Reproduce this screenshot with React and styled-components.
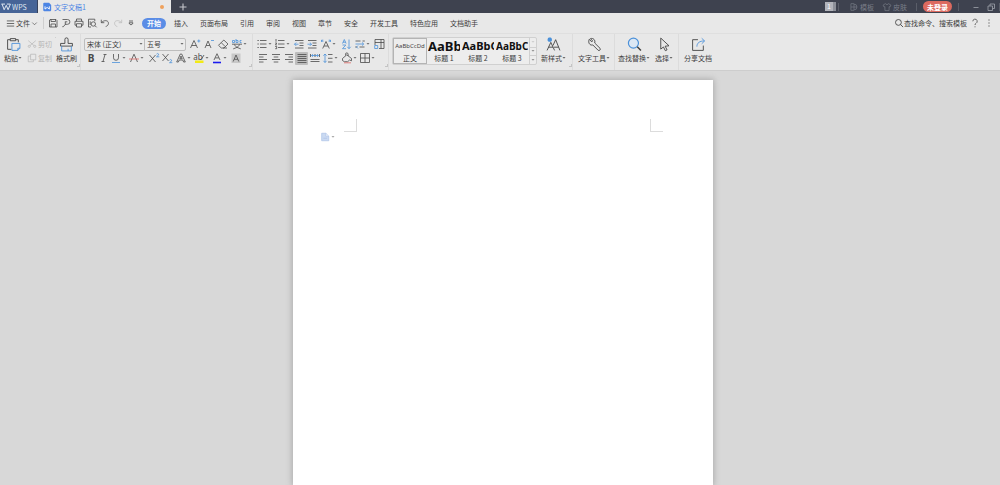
import React from 'react';
import styled, { createGlobalStyle } from 'styled-components';

const ink = '#4a4a4a';
const blue = '#4a90d9';

const GlobalStyle = createGlobalStyle`
  * { box-sizing: border-box; }
  body {
    margin: 0;
    background: #d8d8d8;
    color: #3c3c3c;
    font: 7px/10px "Noto Sans CJK SC", "Noto Sans", sans-serif;
  }
  button, input, select {
    font: inherit;
    color: inherit;
    border: 0;
    padding: 0;
    margin: 0;
    background: none;
    outline: 0;
    white-space: nowrap;
  }
`;

const Shell = styled.div`
  display: flex;
  flex-direction: column;
  min-height: 100vh;
`;

/* ---------- title bar ---------- */

const TitleBar = styled.header`
  display: flex;
  align-items: stretch;
  height: 13px;
  background: #3e424f;
  color: #797d88;
`;

const HomeTab = styled.button`
  display: flex;
  align-items: center;
  gap: 1px;
  width: 38px;
  padding-left: 1px;
  background: #466497;
  border-right: 1px solid #37425c;
  color: #dfe6f1;
`;

const DocTab = styled.button`
  display: flex;
  align-items: center;
  gap: 2px;
  width: 133px;
  padding: 0 7px 0 4px;
  background: #e8e8e8;
  color: #4c85e4;
`;

const Unsaved = styled.span`
  width: 4px;
  height: 4px;
  margin-left: auto;
  border-radius: 50%;
  background: #efa15c;
`;

const NewTab = styled.button`
  display: grid;
  place-items: center;
  width: 23px;
  color: #c5c7cd;
`;

const TitleTools = styled.div`
  display: flex;
  align-items: center;
  margin-left: auto;
`;

const TitleButton = styled.button`
  display: flex;
  align-items: center;
  gap: 1px;
  margin-left: ${(props) => props.$before}px;
`;

const Badge = styled.button`
  width: 11px;
  height: 9px;
  background: #b2b4bb;
  border-right: 3px solid #8d9099;
  color: #fff;
  line-height: 9px;
`;

const Divider = styled.span`
  width: 1px;
  height: ${(props) => props.$tall || 8}px;
  margin: 0 ${(props) => props.$right || 0}px 0 ${(props) => props.$left || 0}px;
  background: ${(props) => (props.$dark ? '#5a5e69' : '#cfcfcf')};
`;

const Login = styled.button`
  width: 29px;
  height: 11px;
  border-radius: 6px;
  background: #dc6a5f;
  color: #fff;
  font-weight: 700;
`;

const WindowButton = styled.button`
  display: grid;
  place-items: center;
  width: 15px;
  height: 13px;
  color: #a0a3ab;
`;

/* ---------- menu bar ---------- */

const MenuBar = styled.nav`
  display: flex;
  align-items: center;
  height: 21px;
  padding: 0 5px;
  background: #e8e8e8;
  border-bottom: 1px solid #dfdfdf;
`;

const FileMenu = styled.button`
  display: flex;
  align-items: center;
  width: 34px;
`;

const QuickBar = styled.div`
  display: flex;
  align-items: center;
  margin-left: 2px;
`;

const MenuTabs = styled.div`
  display: flex;
  align-items: center;
  margin-left: 5px;
`;

const MenuTab = styled.button`
  padding: 0 6px;
  white-space: nowrap;
`;

const ActiveTab = styled(MenuTab)`
  width: 24px;
  height: 11px;
  margin-right: 2px;
  padding: 0;
  border-radius: 6px;
  background: #5b8de6;
  color: #fff;
  font-weight: 700;
`;

const SearchBox = styled.label`
  display: flex;
  align-items: center;
  margin-left: auto;
`;

const SearchInput = styled.input`
  width: 64px;
  height: 10px;

  &::placeholder {
    color: #3c3c3c;
    opacity: 1;
  }
`;

/* ---------- ribbon ---------- */

const Ribbon = styled.section`
  display: flex;
  height: 37px;
  background: #e8e8e8;
  border-bottom: 1px solid #cdcdcd;
`;

const Group = styled.div`
  display: flex;
  align-items: flex-start;
  padding: 3px 0 3px ${(props) => props.$pad || 3}px;
  border-right: ${(props) => (props.$last ? 0 : '1px solid #dcdcdc')};
`;

const Launcher = styled.button`
  align-self: flex-end;
  width: 3px;
  height: 3px;
  border: solid #c4c4c4;
  border-width: 0 1px 1px 0;
`;

const Rows = styled.div`
  display: grid;
  grid-template-rows: 14px 14px;
`;

const Row = styled.div`
  display: flex;
  align-items: center;
`;

const BigButton = styled.button`
  display: flex;
  flex-direction: column;
  align-items: center;
  margin-right: ${(props) => props.$after || 0}px;
`;

const BigIcon = styled.span`
  display: grid;
  place-items: center;
  height: 15px;
`;

const BigLabel = styled.span`
  display: flex;
  align-items: center;
  height: 12px;
`;

const TextButton = styled.button`
  display: flex;
  align-items: center;
  gap: 1px;
  height: 14px;
  color: ${(props) => (props.disabled ? '#b4b4b4' : ink)};
`;

const Tool = styled.button`
  display: flex;
  align-items: center;
  justify-content: ${(props) => (props.$split ? 'flex-start' : 'center')};
  width: ${(props) => (props.$split ? 18 : 13)}px;
  height: 13px;
  margin-right: ${(props) => props.$after || 0}px;
  border-radius: 1px;
  background: ${(props) => (props.$on ? '#bdbdbd' : 'transparent')};
  color: ${(props) => (props.disabled ? '#bcbcbc' : ink)};
`;

const Combo = styled.label`
  display: flex;
  align-items: center;
  width: ${(props) => props.$w}px;
  height: 13px;
  padding: 0 1px 0 2px;
  margin-right: ${(props) => props.$after || 0}px;
  margin-left: ${(props) => (props.$joined ? -1 : 0)}px;
  border: 1px solid #bdbdbd;
  border-radius: ${(props) => (props.$joined ? '0 2px 2px 0' : '2px 0 0 2px')};
  background: #ebebeb;
`;

const Select = styled.select`
  flex: 1;
  min-width: 0;
  height: 11px;
  appearance: none;
`;

const Gallery = styled.div`
  display: flex;
  height: 28px;
  margin-right: 4px;
  border: 1px solid #d0d0d0;
  border-radius: 2px;
  background: #ededed;
`;

const StyleCard = styled.button`
  display: flex;
  flex-direction: column;
  align-items: center;
  width: 34px;
  padding: 0 1px;
  box-shadow: ${(props) => (props.$on ? 'inset 0 0 0 1px #b4b4b4' : 'none')};
`;

const Sample = styled.span`
  width: 100%;
  height: 15px;
  overflow: hidden;
  color: ${(props) => (props.$bold ? '#111' : '#444')};
  font-family: "Noto Sans", sans-serif;
  font-size: ${(props) => props.$size}px;
  font-weight: ${(props) => (props.$bold ? 700 : 400)};
  line-height: 16px;
  text-align: ${(props) => (props.$bold ? 'left' : 'center')};
`;

const GalleryScroll = styled.div`
  display: grid;
  grid-template-rows: repeat(3, 1fr);
  width: 7px;
  border-left: 1px solid #d0d0d0;
`;

const ScrollButton = styled.button`
  display: grid;
  place-items: center;
  color: ${(props) => (props.disabled ? '#c4c4c4' : '#777')};

  & + & {
    border-top: 1px solid #d0d0d0;
  }
`;

/* ---------- document ---------- */

const Workspace = styled.main`
  display: flex;
  flex: 1;
  justify-content: center;
  padding: 9px 0 0 6px;
  background: #d8d8d8;
`;

const Paper = styled.article`
  width: 420px;
  max-width: 90%;
  padding: 39px 50px 0 27px;
  background: #fff;
  box-shadow: 0 0 6px 1px #acacac;
`;

const MarginRow = styled.div`
  display: flex;
  justify-content: space-between;
  padding-left: 24px;
`;

const Corner = styled.span`
  width: 13px;
  height: 13px;
  border: solid #dcdcdc;
  border-width: ${(props) => (props.$right ? '0 0 1px 1px' : '0 1px 1px 0')};
`;

const PasteOptions = styled.button`
  display: flex;
  align-items: center;
  gap: 1px;
  height: 9px;
  color: #8a8a8a;
`;

/* ---------- icons ---------- */

const Svg = styled.svg`
  flex: none;
  display: block;
  fill: none;
  stroke: currentColor;
  stroke-width: ${(props) => props.$weight || 0.8};
  font-family: "Noto Sans", sans-serif;

  text {
    fill: currentColor;
    stroke: none;
    text-anchor: middle;
  }
`;

const CaretSvg = styled(Svg)`
  opacity: 0.75;
`;

const icons = {
  wps: <path strokeWidth="1.200" d="M0.500 2.500h4.300M1.300 2.500 3.800 9.300 6.300 4l2.200 5.300L11.300 2.500H7" />,
  doc: (
    <>
      <path fill="#4c85e4" stroke="none" d="M2.500 1h6L11 3.500V10a1 1 0 0 1-1 1H2.500a1 1 0 0 1-1-1V2a1 1 0 0 1 1-1z" />
      <path stroke="#fff" strokeWidth="1.100" d="M3.600 5.200v3.300l2.600-2 2.600 2V5.200" />
    </>
  ),
  plus: <path strokeWidth="1.1" d="M6 2.500v7M2.500 6h7" />,
  template: <path d="M6 2H2.300v8H6M6 2.500a3.500 3.500 0 1 1 0 7zM6 6h3.500M2.300 6H6" />,
  skin: <path d="M4 2 1.300 3.800l1.200 2.200 1-.4v4.700h5V5.600l1 .4 1.200-2.200L8 2Q6 4.600 4 2z" />,
  minimize: <path d="M3.500 6.500h5" />,
  restore: <path d="M3 5h4.500v4.500H3zM5 5V3h4.500v4.500h-2" />,
  menu: <path d="M2 3.200h8M2 6h8M2 8.800h8" />,
  chevron: <path d="M3 4.700 6 7.700 9 4.700" />,
  save: <path d="M3 2.500h6l1 1v6.500H2.500V3zM4 2.500v2h4.500v-2M4 10V7h4.500v3" />,
  preview: <path d="M2.500 2.500h5a2.400 2.400 0 0 1 0 4.800H5M5.300 4.500v2.800L3.400 9.700H2.300M5.300 4.800h2" />,
  print: <path d="M3.500 4.300V2h5v2.300M3.500 8.200H2V4.300h8v3.900H8.500M3.500 6.700h5V10h-5z" />,
  findFile: <path d="M5 10H2.500V2.200h6.300v2M4.200 8V4.300M9 8.700l1.600 1.600M7.300 4.800a2.200 2.200 0 1 1 0 4.400 2.200 2.200 0 0 1 0-4.400z" />,
  undo: <path d="M2.300 2.700v3h3M2.500 5.500C5.500 2.400 10 3.500 9.400 6.700 9.200 8.300 8 9.200 6.700 9.500" />,
  redo: <path d="M9.700 2.700v3h-3M9.500 5.500C6.500 2.400 2 3.500 2.600 6.700 2.800 8.300 4 9.200 5.300 9.500" />,
  more: <path d="M4 4h4M4 5.800h4v.5L6 8 4 6.300z" />,
  search: <path d="M5.300 1.800a3.500 3.500 0 1 1 0 7 3.500 3.500 0 0 1 0-7zM7.900 7.900l3 3" />,
  help: <path d="M3.800 4.300a2.200 2.200 0 1 1 3.200 2Q6 6.900 6 8M6 9.300v1" />,
  dots: <path strokeWidth="1.100" d="M6 2.500v1.100M6 5.500v1.100M6 8.500v1.100" />,
  paste: (
    <>
      <path d="M4 2.500H1.500v9H5M9 2.500h2.500V5M4 1.500h5v2H4z" />
      <path stroke={blue} d="M5.500 6h7.500v4.500l-2 2H5.500zM13 10.500h-2v2" />
    </>
  ),
  cut: <path d="M1.500 2l7 6M10.500 2l-7 6M2.700 7.500a1.300 1.300 0 1 1 0 2.600 1.300 1.300 0 0 1 0-2.600zM9.300 7.500a1.300 1.300 0 1 1 0 2.600 1.300 1.300 0 0 1 0-2.600z" />,
  copy: <path d="M4.300 1.500h6.200v6.700H4.300zM4.300 3.700H1.500v6.800h6.200V8.200" />,
  painter: (
    <>
      <path d="M5.500 6V2.300a1.500 1.500 0 0 1 3 0V6H12.500v2.500h-11V6z" />
      <path stroke={blue} d="M2.500 8.500V13h9V8.500M8.500 13v-2" />
    </>
  ),
  grow: (
    <>
      <path d="M1.500 10 5 2.500 8.500 10M2.700 7.500h4.600" />
      <path stroke={blue} d="M9.800 1.500v3M8.300 3h3" />
    </>
  ),
  shrink: (
    <>
      <path d="M2 10 5 3 8 10M3.100 7.500h3.800" />
      <path stroke={blue} d="M8 2.500h3" />
    </>
  ),
  eraser: <path d="M6.800 2 11 6 7 10H4.300L1.500 7.300zM4.300 4.700 8.300 8.700M6 10h4" />,
  phonetic: (
    <>
      <path stroke={blue} d="M1.500 2.500h2v2h-2zM5 1v3.500h2v-2H5M10.500 2.500H9v2h1.500" />
      <path d="M1 6.200h10M3 6.500Q5.500 10 9.800 10.900M9 6.500Q6.500 10 2.200 10.900" />
    </>
  ),
  bold: <text x="6" y="9.500" fontSize="10" fontWeight="700">B</text>,
  italic: <path d="M5.500 2.500h3M3.500 9.500h3M7 2.500l-2 7" />,
  underline: (
    <>
      <path d="M3.500 2v3.800a2.500 2.500 0 0 0 5 0V2" />
      <path stroke={blue} d="M2 10.500h8" />
    </>
  ),
  strike: (
    <>
      <path d="M2.500 10 6 2.200 9.500 10" />
      <path stroke="#df6b67" d="M1 7h10" />
    </>
  ),
  sup: (
    <>
      <path d="M1.500 3l6 7M7.500 3l-6 7" />
      <path stroke={blue} d="M8.500 2.200q1.200-1.400 2.200 0 .3 1-2.200 2.600h2.800" />
    </>
  ),
  sub: (
    <>
      <path d="M1.500 2l6 7M7.500 2l-6 7" />
      <path stroke={blue} d="M8.500 8.200q1.200-1.400 2.200 0 .3 1-2.200 2.500h2.800" />
    </>
  ),
  effect: <path d="M1.700 10 5.300 2h1.400l3.600 8H8.600L7.800 8H4.200l-.8 2zM6 4 4.800 6.700h2.400z" />,
  highlight: (
    <>
      <path fill="#f2ea16" stroke="none" d="M2 8.500h8.500V11H2z" />
      <text x="5" y="8" fontSize="8">ab</text>
      <path d="M11 3 8.500 7" />
    </>
  ),
  color: (
    <>
      <path d="M3 8 6 1.700 9 8M4.200 5.900h3.600" />
      <path stroke="#1b1bee" strokeWidth="1.600" d="M2 10.500h8" />
    </>
  ),
  shade: (
    <>
      <path fill="#c8c8c8" stroke="none" d="M1.500 1.500h9v9.500h-9z" />
      <path d="M3.200 9.500 6 3 8.800 9.500M4.200 7.300h3.600" />
    </>
  ),
  bullets: (
    <>
      <path d="M4 2.500h6.500M4 6h6.500M4 9.500h6.500" />
      <path stroke="#555" strokeWidth="1.200" d="M1.500 2.500h1.200M1.500 6h1.200M1.500 9.500h1.200" />
    </>
  ),
  numbers: (
    <>
      <path d="M4 2.500h6.500M4 6h6.500M4 9.500h6.500" />
      <path d="M2 1v2.700M1.200 5h1.500L1.500 7h1.300M1.200 8.500h1.500v2.200H1.200" />
    </>
  ),
  outdent: (
    <>
      <path d="M2 2.500h8.500M6.500 5h4M6.500 7.500h4M2 10h8.500" />
      <path stroke={blue} d="M5.500 6.200h-4M3.200 4.500 1.500 6.200l1.700 1.700" />
    </>
  ),
  indent: (
    <>
      <path d="M2 2.500h8.500M6.500 5h4M6.500 7.500h4M2 10h8.500" />
      <path stroke={blue} d="M1.500 6.200h4M3.800 4.500l1.700 1.700-1.700 1.700" />
    </>
  ),
  scale: (
    <>
      <path d="M2.700 10.500 6 3.500l3.300 7M4 8h4" />
      <path stroke={blue} d="M3.300 4 1.500 2.200M1.500 4V2.200h1.800M8.700 4l1.800-1.800M8.700 2.200h1.800V4" />
    </>
  ),
  sort: (
    <>
      <path stroke={blue} d="M2.500 5.500l1.800-4 1.800 4M3 4.200h2.600M2.500 7h3.300l-3.300 3.700H6" />
      <path stroke={blue} d="M9 1.500v9M7.300 8.800 9 10.700l1.700-1.900" />
    </>
  ),
  tabs: (
    <>
      <path d="M1.500 3h5M5.500 9h5M8.500 3h2.300M1.200 9h2" />
      <path stroke={blue} d="M1.500 6h8M8 4.400 9.700 6 8 7.600M4 7.500 2.500 9 4 10.500" />
    </>
  ),
  frame: (
    <>
      <path d="M2 7V1.500h9v9H6M2 4.500h9M8 1.500v9" />
      <path stroke={blue} d="M1.700 10.500V7.500h3v3z" />
    </>
  ),
  left: <path d="M2 2.500h8M2 5h4.500M2 7.500h8M2 10h4.500" />,
  center: <path d="M2 2.500h8M3.700 5h4.600M2 7.500h8M3.700 10h4.600" />,
  right: <path d="M2 2.500h8M5.500 5H10M2 7.500h8M5.500 10H10" />,
  justify: <path d="M1.500 2.500h9M1.500 4.500h9M1.500 6.500h9M1.500 8.500h9M1.500 10.500h9" />,
  distribute: (
    <>
      <path d="M1.500 2v3M10.500 2v3M6 2v3M1.500 7.500h9M1.500 9.500h9" />
      <path stroke={blue} d="M2.500 3.500h7M4 2.200 2.500 3.500 4 4.800M8 2.200l1.500 1.300L8 4.800" />
    </>
  ),
  spacing: (
    <>
      <path d="M6 2.500h4.500M6 6.300h4.500M6 10h4.500" />
      <path stroke={blue} d="M3 2v8.500M1.400 3.700 3 2l1.600 1.700M1.400 8.800 3 10.500l1.600-1.700" />
    </>
  ),
  fill: (
    <>
      <path d="M4.500 3.500V2.200a1.300 1.300 0 0 1 2.600 0V4M1.500 6.500l4.300-3.700L10.500 6.500v2.300l-2-.8L6.700 9.700H3.300L1.500 8.500z" />
      <path stroke="#df6b67" d="M3 10.800h7" />
    </>
  ),
  border: <path d="M1.500 1.500h9v9h-9zM6 1.500v9M1.500 6h9" />,
  newStyle: (
    <>
      <path d="M1 12.500 4.500 5 8 12.500M2.400 9.500h4.200M6.500 8 9 2.500l4 10M7.500 9.500h4.200" />
      <path stroke={blue} strokeWidth="1.400" d="M3.500.5v4M1.500 2.500h4M2 1l3 3M5 1 2 4" />
    </>
  ),
  wrench: <path d="M2 2.200 4.500 4.500 5.300 3.700 3.200 1.500C6 .7 8 3 7.200 5.600l5 5a1.300 1.300 0 0 1-1.800 1.800l-5-5C2.700 8.200.8 5.500 2 2.200z" />,
  lens: (
    <>
      <path stroke={blue} strokeWidth="1.100" fill="#dbe7f4" d="M6 1a4.700 4.700 0 1 1 0 9.400A4.700 4.700 0 0 1 6 1z" />
      <path strokeWidth="1.300" d="M9.600 9.200 13 12.600" />
    </>
  ),
  cursor: <path d="M3.500 1v10.300l2.500-2 1.800 3.500 1.600-.8-1.800-3.400 3.600-.4z" />,
  share: (
    <>
      <path d="M6.500 2.500h-5v10h10V8" />
      <path stroke={blue} d="M5.500 9C5.500 5.500 8 3.700 12.500 3.700M10 1.200l2.700 2.500L10 6.300" />
    </>
  ),
  pasteDoc: <path fill="#cbdaf2" stroke="#a9c0e6" d="M2 1.500h5L10.500 5v5.500H2zM7 1.500V5h3.500M4 7.500h4.500" />,
};

function Icon({ name, size = 12, box = 12, weight }) {
  return (
    <Svg width={size} height={size} viewBox={`0 0 ${box} ${box}`} $weight={weight} aria-hidden="true">
      {icons[name]}
    </Svg>
  );
}

function Caret() {
  return (
    <CaretSvg width="4" height="4" viewBox="0 0 4 4" aria-hidden="true">
      <path fill="currentColor" stroke="none" d="M.5 1h3L2 2.800z" />
    </CaretSvg>
  );
}

function ToolButton({ name, label, split, after, on, disabled }) {
  return (
    <Tool aria-label={label} $split={split} $after={after} $on={on} disabled={disabled}>
      <Icon name={name} />
      {split && <Caret />}
    </Tool>
  );
}

function RibbonButton({ name, label, split, after }) {
  return (
    <BigButton $after={after}>
      <BigIcon><Icon name={name} size={15} box={14} /></BigIcon>
      <BigLabel>
        {label}
        {split && <Caret />}
      </BigLabel>
    </BigButton>
  );
}

/* ---------- data ---------- */

const quickTools = [
  { name: 'save', label: '保存' },
  { name: 'preview', label: '输出' },
  { name: 'print', label: '打印' },
  { name: 'findFile', label: '打印预览' },
  { name: 'undo', label: '撤销' },
  { name: 'redo', label: '恢复', disabled: true },
  { name: 'more', label: '更多' },
];

const menuTabs = ['插入', '页面布局', '引用', '审阅', '视图', '章节', '安全', '开发工具', '特色应用', '文档助手'];

const fontRow = [
  { name: 'bold', label: '加粗' },
  { name: 'italic', label: '倾斜' },
  { name: 'underline', label: '下划线', split: true },
  { name: 'strike', label: '删除线', split: true, after: 1 },
  { name: 'sup', label: '上标' },
  { name: 'sub', label: '下标', after: 2 },
  { name: 'effect', label: '文字效果', split: true },
  { name: 'highlight', label: '突出显示', split: true },
  { name: 'color', label: '字体颜色', split: true },
  { name: 'shade', label: '字符底纹' },
];

const listRow = [
  { name: 'bullets', label: '项目符号', split: true },
  { name: 'numbers', label: '编号', split: true },
  { name: 'outdent', label: '减少缩进' },
  { name: 'indent', label: '增加缩进', after: 2 },
  { name: 'scale', label: '中文版式', split: true, after: 1 },
  { name: 'sort', label: '排序', after: 2 },
  { name: 'tabs', label: '制表位', split: true },
  { name: 'frame', label: '插入框' },
];

const alignRow = [
  { name: 'left', label: '左对齐' },
  { name: 'center', label: '居中' },
  { name: 'right', label: '右对齐' },
  { name: 'justify', label: '两端对齐', on: true },
  { name: 'distribute', label: '分散对齐', after: 1 },
  { name: 'spacing', label: '行距', split: true, after: 1 },
  { name: 'fill', label: '底纹颜色', split: true },
  { name: 'border', label: '边框', split: true },
];

const textStyles = [
  { sample: 'AaBbCcDd', label: '正文', size: 6, on: true },
  { sample: 'AaBb', label: '标题 1', size: 13, bold: true },
  { sample: 'AaBbC', label: '标题 2', size: 11, bold: true },
  { sample: 'AaBbCc', label: '标题 3', size: 10, bold: true },
];

function ToolRow({ tools }) {
  return (
    <Row>
      {tools.map((tool) => <ToolButton key={tool.name} {...tool} />)}
    </Row>
  );
}

function Header() {
  return (
    <TitleBar>
      <HomeTab><Icon name="wps" size={10} />WPS</HomeTab>
      <DocTab>
        <Icon name="doc" size={10} />
        文字文稿1
        <Unsaved />
      </DocTab>
      <NewTab aria-label="新建"><Icon name="plus" /></NewTab>
      <TitleTools>
        <Badge>1</Badge>
        <Divider $dark $left={2} />
        <TitleButton $before={10}><Icon name="template" size={10} />模板</TitleButton>
        <TitleButton $before={8}><Icon name="skin" size={10} />皮肤</TitleButton>
        <Divider $dark $left={9} $right={6} />
        <Login>未登录</Login>
        <Divider $dark $left={6} $right={9} />
        <WindowButton aria-label="最小化"><Icon name="minimize" /></WindowButton>
        <WindowButton aria-label="还原"><Icon name="restore" /></WindowButton>
        <Divider $dark $left={1} />
      </TitleTools>
    </TitleBar>
  );
}

function Menu() {
  return (
    <MenuBar>
      <FileMenu>
        <Icon name="menu" size={11} />
        文件
        <Icon name="chevron" size={9} />
      </FileMenu>
      <Divider $tall={12} $left={4} />
      <QuickBar>
        {quickTools.map((tool) => <ToolButton key={tool.name} {...tool} />)}
      </QuickBar>
      <MenuTabs>
        <ActiveTab>开始</ActiveTab>
        {menuTabs.map((tab) => <MenuTab key={tab}>{tab}</MenuTab>)}
      </MenuTabs>
      <SearchBox>
        <Icon name="search" size={10} weight={1} />
        <SearchInput aria-label="查找命令" placeholder="查找命令、搜索模板" />
      </SearchBox>
      <ToolButton name="help" label="帮助" after={1} />
      <ToolButton name="dots" label="更多选项" />
    </MenuBar>
  );
}

function Toolbar() {
  return (
    <Ribbon>
      <Group $pad={4}>
        <RibbonButton name="paste" label="粘贴" split after={5} />
        <Rows>
          <TextButton disabled><Icon name="cut" size={10} />剪切</TextButton>
          <TextButton disabled><Icon name="copy" size={10} />复制</TextButton>
        </Rows>
        <Divider $left={3} $tall={1} />
        <RibbonButton name="painter" label="格式刷" />
        <Launcher aria-label="剪贴板" />
      </Group>
      <Group>
        <Rows>
          <Row>
            <Combo $w={61}>
              <Select aria-label="字体"><option>宋体 (正文)</option></Select>
              <Caret />
            </Combo>
            <Combo $w={42} $joined $after={2}>
              <Select aria-label="字号"><option>五号</option></Select>
              <Caret />
            </Combo>
            <ToolButton name="grow" label="增大字号" after={1} />
            <ToolButton name="shrink" label="减小字号" after={1} />
            <ToolButton name="eraser" label="清除格式" after={2} />
            <ToolButton name="phonetic" label="拼音指南" split />
          </Row>
          <ToolRow tools={fontRow} />
        </Rows>
        <Launcher aria-label="字体设置" />
      </Group>
      <Group>
        <Rows>
          <ToolRow tools={listRow} />
          <ToolRow tools={alignRow} />
        </Rows>
        <Launcher aria-label="段落设置" />
      </Group>
      <Group>
        <Gallery>
          {textStyles.map((item) => (
            <StyleCard key={item.label} $on={item.on}>
              <Sample $size={item.size} $bold={item.bold}>{item.sample}</Sample>
              {item.label}
            </StyleCard>
          ))}
          <GalleryScroll>
            <ScrollButton aria-label="上一行" disabled><Caret /></ScrollButton>
            <ScrollButton aria-label="下一行"><Caret /></ScrollButton>
            <ScrollButton aria-label="展开"><Caret /></ScrollButton>
          </GalleryScroll>
        </Gallery>
        <RibbonButton name="newStyle" label="新样式" split after={3} />
        <Launcher aria-label="样式设置" />
      </Group>
      <Group $pad={5}>
        <RibbonButton name="wrench" label="文字工具" split after={4} />
      </Group>
      <Group>
        <RibbonButton name="lens" label="查找替换" split after={5} />
        <RibbonButton name="cursor" label="选择" split after={5} />
      </Group>
      <Group $pad={5} $last>
        <RibbonButton name="share" label="分享文档" />
      </Group>
    </Ribbon>
  );
}

export default function App() {
  return (
    <Shell>
      <GlobalStyle />
      <Header />
      <Menu />
      <Toolbar />
      <Workspace>
        <Paper>
          <MarginRow>
            <Corner />
            <Corner $right />
          </MarginRow>
          <PasteOptions aria-label="粘贴选项">
            <Icon name="pasteDoc" size={10} />
            <Caret />
          </PasteOptions>
        </Paper>
      </Workspace>
    </Shell>
  );
}
